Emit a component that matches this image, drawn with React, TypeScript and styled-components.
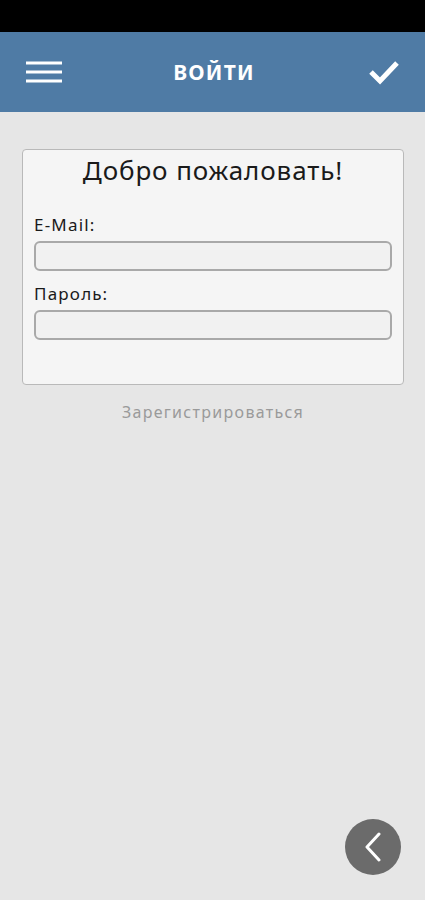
import { createGlobalStyle } from 'styled-components';
import styled from 'styled-components';

const GlobalStyle = createGlobalStyle`
    html, body {
        margin: 0;
        padding: 0;
        background: #e6e6e6;
        font-family: 'Noto Sans', 'Open Sans', sans-serif;
    }
    * {
        box-sizing: border-box;
    }
`;

const Screen = styled.div`
    position: relative;
    width: 425px;
    height: 900px;
    display: flex;
    flex-direction: column;
    background: #e6e6e6;
    overflow: hidden;
`;

const StatusBar = styled.div`
    height: 32px;
    background: #000;
`;

const Header = styled.header`
    height: 80px;
    background: #4f7ba5;
    display: flex;
    align-items: center;
    justify-content: space-between;
    padding: 0 23px 0 26px;
    color: #fff;
`;

const HeaderTitle = styled.h1`
    margin: 0;
    font-size: 21px;
    font-weight: 700;
    letter-spacing: 1.2px;
    color: #fff;
`;

const IconButton = styled.button`
    all: unset;
    display: flex;
    align-items: center;
    justify-content: center;
    width: 36px;
    height: 36px;
`;

const Content = styled.main`
    display: flex;
    flex-direction: column;
    align-items: center;
    padding: 37px 21px 0 22px;
    gap: 16px;
`;

const Card = styled.form`
    width: 100%;
    height: 236px;
    background: #f5f5f5;
    border: 1px solid #b9b9b9;
    border-radius: 4px;
    padding: 2px 11px 0 11px;
    display: flex;
    flex-direction: column;
`;

const Title = styled.h2`
    margin: 0 0 26px;
    text-align: center;
    font-size: 26px;
    font-weight: 400;
    letter-spacing: 0.9px;
    line-height: 36px;
    color: #1a1a1a;
`;

const Field = styled.label`
    display: flex;
    flex-direction: column;
    gap: 5px;
    margin-bottom: 12px;
`;

const FieldLabel = styled.span`
    font-size: 17px;
    letter-spacing: 1.2px;
    line-height: 22px;
    color: #1a1a1a;
`;

const Input = styled.input`
    all: unset;
    height: 30px;
    border: 2px solid #a9a9a9;
    border-radius: 6px;
    background: #f1f1f1;
    box-sizing: border-box;
`;

const RegisterLink = styled.a`
    font-size: 16px;
    color: #9a9a9a;
    text-decoration: none;
    letter-spacing: 1.3px;
`;

const BackButton = styled.button`
    all: unset;
    position: absolute;
    left: 345px;
    top: 819px;
    width: 56px;
    height: 56px;
    border-radius: 50%;
    background: #6b6b6b;
    display: flex;
    align-items: center;
    justify-content: center;
`;

const App = () => {
    return (
        <Screen>
            <GlobalStyle />
            <StatusBar />
            <Header>
                <IconButton aria-label="menu">
                    <svg width="36" height="22" viewBox="0 0 36 22">
                        <g stroke="#fff" strokeWidth="3">
                            <line x1="0" y1="2" x2="36" y2="2" />
                            <line x1="0" y1="11" x2="36" y2="11" />
                            <line x1="0" y1="20" x2="36" y2="20" />
                        </g>
                    </svg>
                </IconButton>
                <HeaderTitle>ВОЙТИ</HeaderTitle>
                <IconButton aria-label="ok">
                    <svg width="32" height="26" viewBox="0 0 32 26">
                        <polyline
                            points="3,13 12,22 29,4"
                            fill="none"
                            stroke="#fff"
                            strokeWidth="5"
                        />
                    </svg>
                </IconButton>
            </Header>
            <Content>
                <Card>
                    <Title>Добро пожаловать!</Title>
                    <Field>
                        <FieldLabel>E-Mail:</FieldLabel>
                        <Input type="email" />
                    </Field>
                    <Field>
                        <FieldLabel>Пароль:</FieldLabel>
                        <Input type="password" />
                    </Field>
                </Card>
                <RegisterLink href="#">Зарегистрироваться</RegisterLink>
            </Content>
            <BackButton aria-label="back">
                <svg width="20" height="30" viewBox="0 0 20 30">
                    <polyline
                        points="16,2 4,15 16,28"
                        fill="none"
                        stroke="#fff"
                        strokeWidth="3"
                        strokeLinecap="round"
                        strokeLinejoin="round"
                    />
                </svg>
            </BackButton>
        </Screen>
    );
};

export default App;
